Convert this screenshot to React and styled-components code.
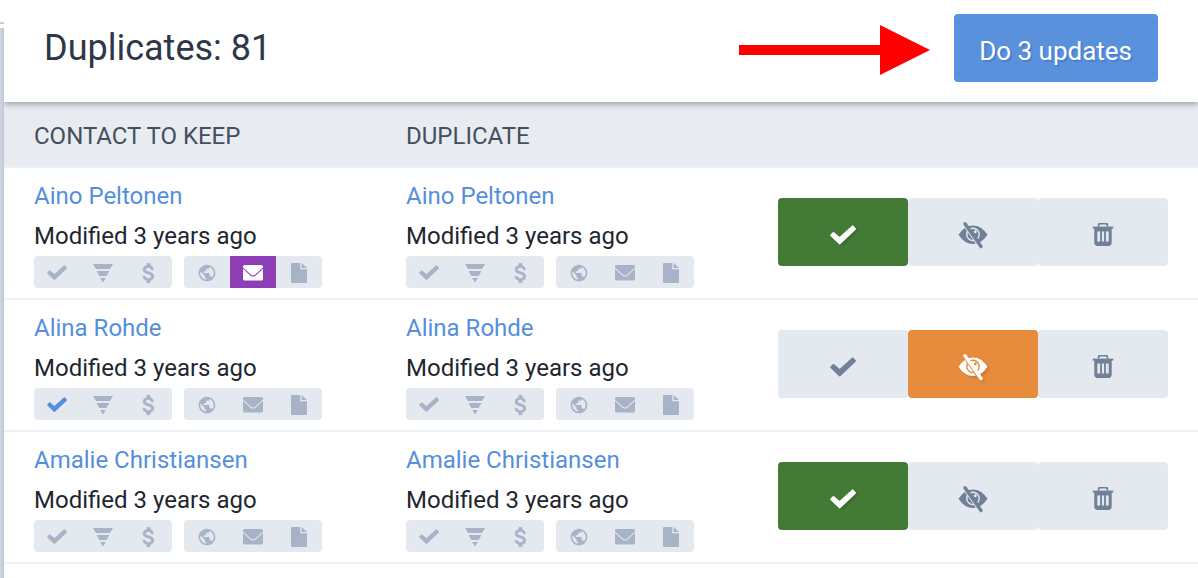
import React, { useState } from 'react';
import styled, { createGlobalStyle, css } from 'styled-components';
import { MdAttachMoney, MdPublic } from 'react-icons/md';

const contacts = [
  { id: 1, name: 'Aino Peltonen', modified: 'Modified 3 years ago', active: { mail: '#8e3fb8' }, action: 'merge' },
  { id: 2, name: 'Alina Rohde', modified: 'Modified 3 years ago', done: true, action: 'ignore' },
  { id: 3, name: 'Amalie Christiansen', modified: 'Modified 3 years ago', action: 'merge' },
];

const CheckIcon = ({ width }) => (
  <svg width={width} viewBox="0 0 26 20" aria-hidden="true">
    <path
      d="M1.2 10.3 3.5 8 9.6 13.2 22.6 1.4 24.9 4 9.6 18.4Z"
      fill="currentColor" stroke="currentColor" strokeWidth="2" strokeLinejoin="round"
    />
  </svg>
);

const FunnelIcon = () => (
  <svg width="20" height="18" viewBox="0 0 20 18" aria-hidden="true">
    <path d="M0 0H20L17 5H3ZM3.6 7H16.4L13.6 12H6.4ZM7.2 14H12.8L10.4 18H9.6Z" fill="currentColor" />
  </svg>
);

const MailIcon = () => (
  <svg width="20" height="16" viewBox="0 0 20 16" aria-hidden="true">
    <path
      d="M1.5 0H18.5Q20 0 20 1.6V2.6L12 9.8Q10 11.2 8 9.8L0 2.6V1.6Q0 0 1.5 0ZM0 3.8 7.2 10.4Q10 12.8 12.8 10.4L20 3.8V14Q20 15.5 18.5 15.5H1.5Q0 15.5 0 14Z"
      fill="currentColor"
    />
  </svg>
);

const FileIcon = () => (
  <svg width="16" height="20" viewBox="0 0 16 20" aria-hidden="true">
    <path d="M1 0H9.3V6.2H16V19Q16 20 15 20H1Q0 20 0 19V1Q0 0 1 0ZM10.6 0 16 5H10.6Z" fill="currentColor" />
  </svg>
);

const EyeOffIcon = () => (
  <svg width="30" height="28" viewBox="0 0 30 28" aria-hidden="true">
    <path d="M.5 13.8Q6.5 4.4 15 4.4T29.5 13.8Q23.5 23 15 23T.5 13.8Z" fill="currentColor" />
    <circle cx="15" cy="13.4" r="6.2" fill="none" stroke="var(--surface)" strokeWidth="1.4" />
    <circle cx="17.3" cy="10.8" r="1.5" fill="var(--surface)" />
    <path d="M6 4.2 21 26" stroke="var(--surface)" strokeWidth="1.6" />
    <path d="M7 2.8 23 25.6" stroke="currentColor" strokeWidth="3.4" strokeLinecap="round" />
  </svg>
);

const TrashIcon = () => (
  <svg width="22" height="24" viewBox="0 1 22 24" fill="none" stroke="currentColor" aria-hidden="true">
    <path d="M6.6 4.5V3.2Q6.6 1.6 8.2 1.6H13.8Q15.4 1.6 15.4 3.2V4.5" strokeWidth="1.8" />
    <path d="M.7 5.6H21.3" strokeWidth="2" />
    <path d="M3.8 6V20.5Q3.8 22.4 5.6 22.4H16.4Q18.2 22.4 18.2 20.5V6" strokeWidth="3" />
    <path d="M4 7.5H18M4 21.6H18" strokeWidth="4" />
    <path d="M9 6V21M13 6V21" strokeWidth="1.8" />
  </svg>
);

const ACTIONS = [
  { key: 'merge', label: 'Merge', color: '#437a36', icon: <CheckIcon width={26} /> },
  { key: 'ignore', label: 'Ignore', color: '#e78b3d', icon: <EyeOffIcon /> },
  { key: 'delete', label: 'Delete', color: '#c53030', icon: <TrashIcon /> },
];

const Contact = ({ name, modified, done, active = {} }) => (
  <>
    <NameLink href="#">{name}</NameLink>
    <Modified>{modified}</Modified>
    <Badges>
      <BadgeGroup>
        <Badge $color={done && '#558fdc'}><CheckIcon width={20} /></Badge>
        <Badge><FunnelIcon /></Badge>
        <Badge><DollarIcon size={26} /></Badge>
      </BadgeGroup>
      <BadgeGroup>
        <Badge><MdPublic size={20} /></Badge>
        <Badge $fill={active.mail}><MailIcon /></Badge>
        <Badge><FileIcon /></Badge>
      </BadgeGroup>
    </Badges>
  </>
);

const DuplicateRow = ({ contact }) => {
  const [ action, setAction ] = useState(contact.action);

  return (
    <tr>
      <Cell><Contact {...contact} /></Cell>
      <Cell><Contact name={contact.name} modified={contact.modified} /></Cell>
      <Cell>
        <Actions>
          {ACTIONS.map(({ key, label, color, icon }) => (
            <ActionButton
              key={key}
              type="button"
              aria-label={label}
              aria-pressed={action === key}
              $fill={action === key ? color : null}
              onClick={() => setAction(key)}>
              {icon}
            </ActionButton>
          ))}
        </Actions>
      </Cell>
    </tr>
  );
};

const App = () => (
  <Page>
    <GlobalStyle />
    <Panel>
      <Header>
        <Title>Duplicates: 81</Title>
        <Arrow viewBox="0 0 191 50" aria-hidden="true">
          <path d="M0 20H141V0L191 25 141 50V30H0Z" fill="#ff0000" />
        </Arrow>
        <UpdateButton type="button">Do 3 updates</UpdateButton>
      </Header>
      <Table>
        <thead>
          <tr>
            <HeadCell>Contact to keep</HeadCell>
            <HeadCell>Duplicate</HeadCell>
            <HeadCell aria-label="Action" />
          </tr>
        </thead>
        <tbody>
          {contacts.map(contact => <DuplicateRow key={contact.id} contact={contact} />)}
        </tbody>
      </Table>
    </Panel>
  </Page>
);


const GlobalStyle = createGlobalStyle`
  * {
    box-sizing: border-box;
  }
  body {
    margin: 0;
    background: #fff;
    color: #1f2630;
    font-family: Roboto, "Liberation Sans", sans-serif;
    font-size: 24px;
  }
  button {
    border: 0;
    font: inherit;
    cursor: pointer;
  }
  svg {
    display: block;
  }
`

const Page = styled.div`
  min-height: 100vh;
  padding-left: 4px;
  background:
    linear-gradient(#d5dae1, #bcc3cc) 0 22px / 4px 2px no-repeat,
    linear-gradient(to right, #cfd6e0, #bfc7d2) 0 28px / 4px 100% no-repeat;
`

const Panel = styled.main`
  min-height: 100vh;
  overflow: hidden;
  background: #fff;
`

const Header = styled.header`
  position: relative;
  display: flex;
  align-items: flex-start;
  height: 102px;
  padding: 14px 40px 20px;
  background: #fff;
  box-shadow: 0 2px 6px rgba(0, 0, 0, 0.35);
`

const Title = styled.h1`
  flex: 1;
  margin: 0;
  color: #2d3748;
  font-size: 36px;
  font-weight: 400;
  line-height: 68px;
`

const Arrow = styled.svg`
  width: 191px;
  margin: 11px 24px 0 0;
`

const UpdateButton = styled.button`
  height: 68px;
  padding: 6px 26px 0 25px;
  border-radius: 4px;
  background: #5a91dc;
  color: #fff;
  font-size: 26px;
  text-shadow: 2px 2px 1px #4a80cf;
`

const Table = styled.table`
  width: 100%;
  table-layout: fixed;
  border-spacing: 0;
`

const cellBox = css`
  padding: 8px 15px 10px;
  border-bottom: 2px solid #edf1f5;
  &:first-child {
    padding-left: 30px;
  }
  &:last-child {
    width: 420px;
    padding-left: 0;
    padding-right: 30px;
  }
`

const HeadCell = styled.th`
  ${cellBox}
  padding-top: 14px;
  background: #e8ecf1;
  color: #434f5e;
  font-weight: 400;
  line-height: 40px;
  text-align: left;
  text-transform: uppercase;
`

const Cell = styled.td`
  ${cellBox}
  vertical-align: middle;
`

const NameLink = styled.a`
  display: block;
  color: #558fdc;
  line-height: 40px;
  text-decoration: none;
`

const Modified = styled.div`
  line-height: 40px;
`

const Badges = styled.div`
  display: flex;
  gap: 12px;
`

const BadgeGroup = styled.div`
  display: flex;
  overflow: hidden;
  border-radius: 4px;
  background: #e4e9f0;
`

const Badge = styled.span`
  display: flex;
  align-items: center;
  justify-content: center;
  width: 46px;
  height: 32px;
  padding-top: 2px;
  color: ${({ $color, $fill }) => $fill ? '#fff' : $color || '#a8b3c7'};
  background: ${({ $fill }) => $fill || 'transparent'};
`

const DollarIcon = styled(MdAttachMoney)`
  path:last-child {
    stroke: currentColor;
    stroke-width: 0.5;
  }
`

const Actions = styled.div`
  display: flex;
`

const ActionButton = styled.button`
  --surface: ${({ $fill }) => $fill || '#e4e9f0'};
  display: flex;
  flex: 1;
  align-items: center;
  justify-content: center;
  height: 68px;
  padding: 6px 0 0;
  border-radius: 4px;
  background: var(--surface);
  color: ${({ $fill }) => $fill ? '#fff' : '#718096'};
  svg {
    filter: ${({ $fill }) => $fill ? 'drop-shadow(2px 2px 1px rgba(0, 0, 0, 0.12))' : 'none'};
  }
`

export default App;
